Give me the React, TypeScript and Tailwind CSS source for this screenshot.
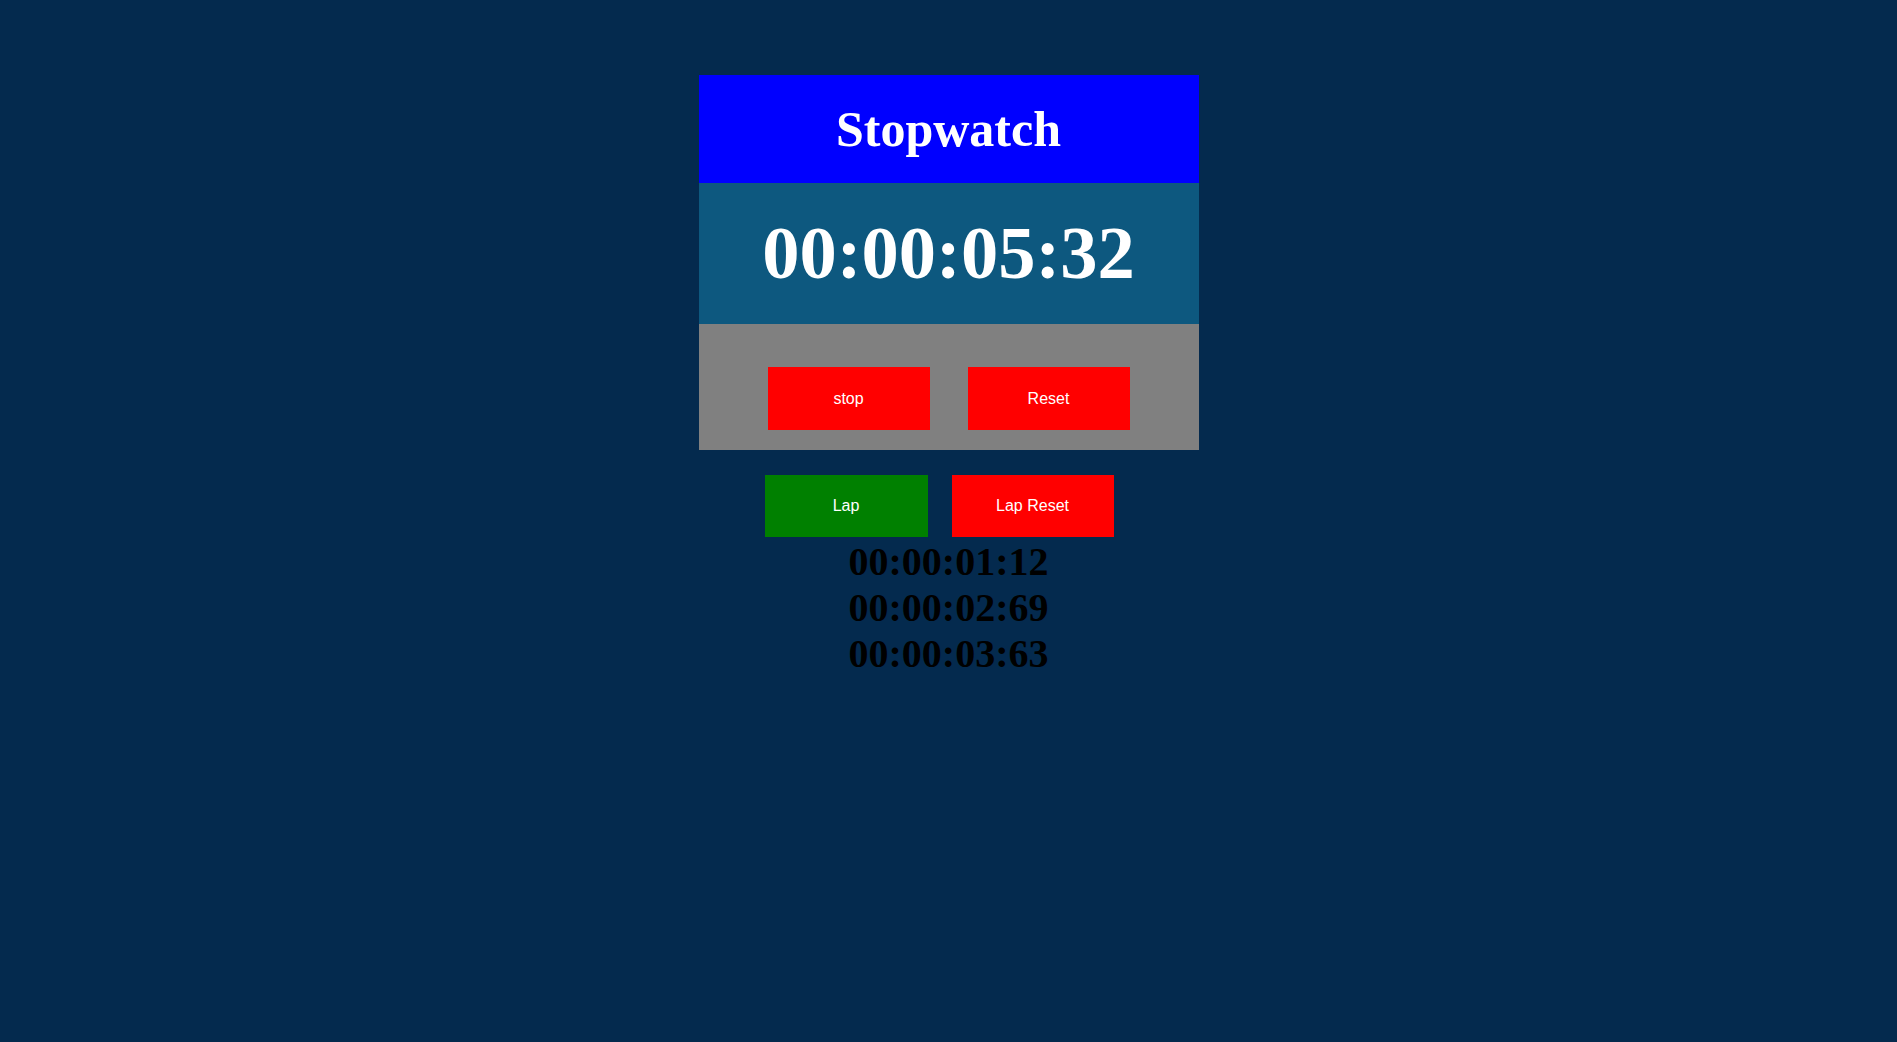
import React from "react";

export default function App() {
  const laps = ["00:00:01:12", "00:00:02:69", "00:00:03:63"];
  const serif = { fontFamily: '"Liberation Serif", "Times New Roman", serif' };
  const sans = { fontFamily: '"Liberation Sans", Arial, sans-serif' };
  return (
    <div className="min-h-[1042px] w-full bg-[#042a4e] pt-[75px]">
      <div className="mx-auto w-[500px]">
        <div className="h-[108px] bg-[#0000ff] pt-[25px] text-center">
          <h1
            className="text-[50px] font-bold leading-[58px] text-white"
            style={serif}
          >
            Stopwatch
          </h1>
        </div>
        <div className="h-[141px] bg-[#0d587f] pt-[26px] text-center">
          <div
            className="text-[74.5px] font-bold leading-[88px] text-white"
            style={serif}
          >
            00:00:05:32
          </div>
        </div>
        <div className="flex h-[126px] gap-[38px] bg-[#808080] pl-[69px] pt-[43px]">
          <button
            className="h-[63px] w-[162px] bg-[#ff0000] text-[16px] text-white"
            style={sans}
          >
            stop
          </button>
          <button
            className="h-[63px] w-[162px] bg-[#ff0000] text-[16px] text-white"
            style={sans}
          >
            Reset
          </button>
        </div>
        <div className="mt-[25px] flex gap-[24px] pl-[66px]">
          <button
            className="h-[62px] w-[163px] bg-[#008000] text-[16px] text-white"
            style={sans}
          >
            Lap
          </button>
          <button
            className="h-[62px] w-[162px] bg-[#ff0000] text-[16px] text-white"
            style={sans}
          >
            Lap Reset
          </button>
        </div>
      </div>
      <div className="mt-[2px] text-center">
        {laps.map((l) => (
          <div
            key={l}
            className="text-[40px] font-bold leading-[46px] text-black"
            style={serif}
          >
            {l}
          </div>
        ))}
      </div>
    </div>
  );
}
